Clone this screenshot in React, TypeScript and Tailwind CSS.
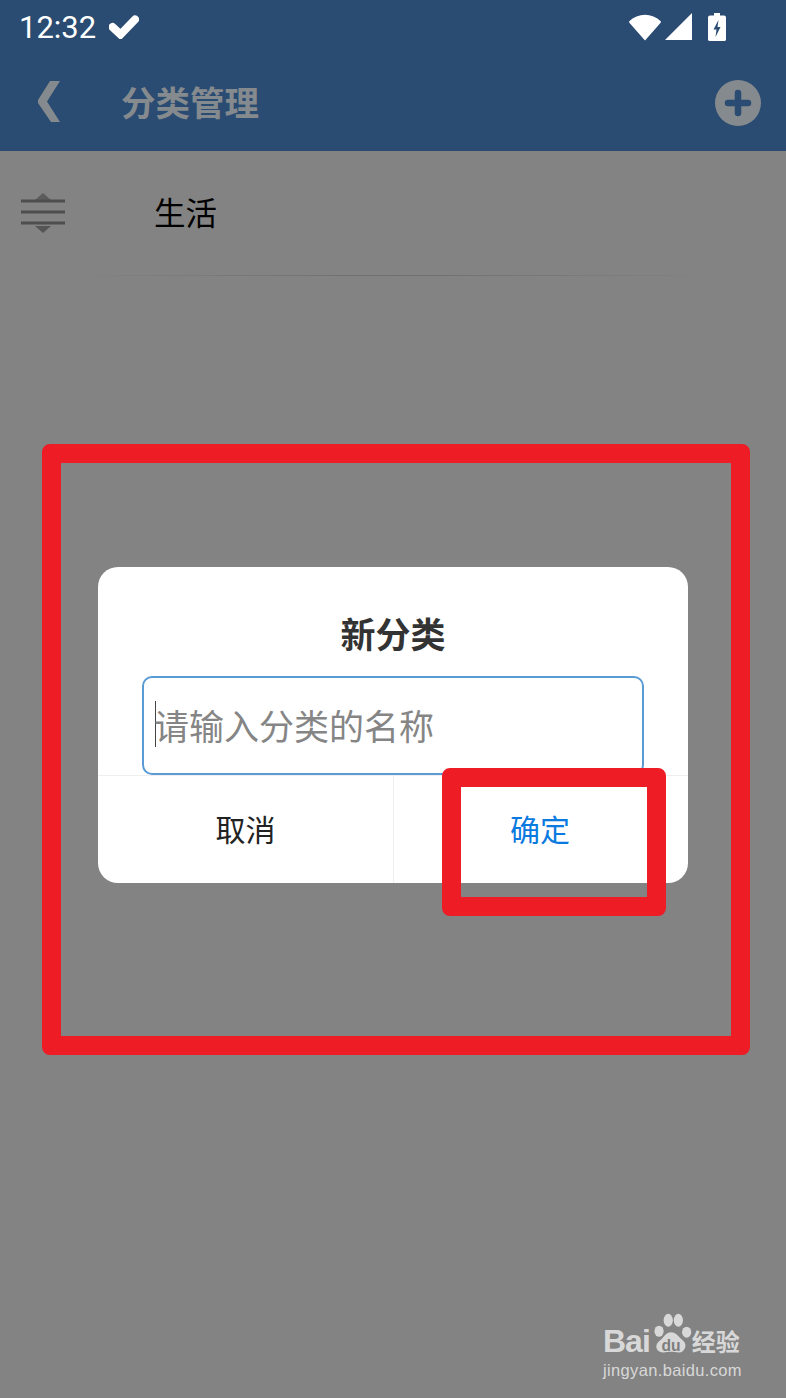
import React from 'react';

const cjk = "font-['Noto_Sans_CJK_SC','Noto_Sans',sans-serif]";

const StatusIcons = () => (
  <div className="flex items-center">
    <svg width="34" height="28" viewBox="0 0 34 28" className="mr-[2px]">
      <path d="M1 8.5 C10 -0.5 24 -0.5 33 8.5 Q33 9.5 32 10.5 L17 27.5 L2 10.5 Q1 9.500 1 8.5 Z" fill="#fff" />
    </svg>
    <svg width="28" height="28" viewBox="0 0 28 28" className="ml-[1px]">
      <path d="M0 27 L27 0 V27 Z" fill="#fff" />
    </svg>
    <svg width="18" height="30" viewBox="0 0 18 30" className="ml-[15px]">
      <path d="M6 1 H12 V3.500 H16 Q18 3.500 18 5.500 V27.500 Q18 29 16 29 H2 Q0 29 0 27.500 V5.500 Q0 3.500 2 3.500 H6 Z" fill="#fff" />
      <path d="M10.500 8 L5.500 17.500 H8.500 L7.500 25 L12.500 15 H9.500 Z" fill="#2a4b72" />
    </svg>
  </div>
);

const Header = () => (
  <header className="h-[151px] bg-[#2a4b72] shrink-0">
    <div className="h-[54px] flex items-center justify-between pl-[19px] pr-[60px]">
      <div className="flex items-center">
        <span className="font-['Roboto',sans-serif] text-[31px] leading-none text-white">12:32</span>
        <svg width="30" height="24" viewBox="0 0 30 24" className="ml-[13px]">
          <path d="M3.500 12 L11.500 19.500 L26 4.500" fill="none" stroke="#fff" strokeWidth="8" strokeLinecap="round" strokeLinejoin="miter" />
        </svg>
      </div>
      <StatusIcons />
    </div>
    <div className="h-[97px] flex items-center pl-[37px] pr-[25px]">
      <svg width="24" height="44" viewBox="0 0 24 44" className="mb-[1px]">
        <path d="M13 1 H23 L10 21.500 L23 42 H14 L1 23 V20 Z" fill="#858a8e" />
      </svg>
      <h1 className={`${cjk} ml-[60px] -mt-[3px] text-[34.500px] leading-none font-bold text-[#858a8e]`}>分类管理</h1>
      <svg width="46" height="46" viewBox="0 0 46 46" className="ml-auto">
        <circle cx="23" cy="23" r="23" fill="#858a8e" />
        <path d="M23 13 V33 M13 23 H33" stroke="#2a4b72" strokeWidth="6.500" strokeLinecap="round" />
      </svg>
    </div>
  </header>
);

const DragIcon = () => (
  <svg width="44" height="42" viewBox="0 0 44 42" className="blur-[0.6px]">
    <path d="M14 8 L22 1 L30 8 Z" fill="#5c5c5c" />
    <path d="M0 9 H44 M0 20 H44 M0 31 H44" stroke="#4e4e4e" strokeWidth="3" />
    <path d="M14 34 H30 L22 41 Z" fill="#555" />
  </svg>
);

const CategoryRow = () => (
  <div>
    <div className="h-[124px] flex items-center pl-[21px]">
      <DragIcon />
      <span className={`${cjk} ml-[89px] -mt-[2px] text-[31.500px] leading-none text-black`}>生活</span>
    </div>
    <div className="mx-[70px] h-px bg-gradient-to-r from-transparent via-[#6e6e6e] to-transparent" />
  </div>
);

const Dialog = () => (
  <div className="w-[590px] h-[316px] bg-white rounded-[20px] flex flex-col overflow-hidden">
    <h2 className={`${cjk} h-[109px] pt-[42px] text-center text-[35px] leading-[47px] font-bold text-[#333]`}>新分类</h2>
    <div className="mx-[44px] h-[99px] shrink-0 border-2 border-[#5a9bd5] rounded-[10px] flex items-center pl-[11px] pb-[3px]">
      <span className="w-px h-[46px] bg-[#444] -mr-[2px]" />
      <span className={`${cjk} text-[35px] leading-none text-[#858585]`}>请输入分类的名称</span>
    </div>
    <div className="flex-1 flex border-t border-[#eeeeee]">
      <div className={`${cjk} w-[296px] border-r border-[#eeeeee] flex items-center justify-center text-[30px] leading-none text-[#222] pb-[4px]`}>
        取消
      </div>
      <div className={`${cjk} flex-1 flex items-center justify-center text-[30px] leading-none text-[#0a7ae0] pb-[4px] pr-[2px]`}>确定</div>
    </div>
  </div>
);

const Watermark = () => (
  <div className="absolute right-[43px] bottom-[18px] w-[140px] text-[#d8d8d8]">
    <div className="flex items-end h-[48px]">
      <span className="font-['Liberation_Sans',sans-serif] font-bold text-[32px] leading-[32px] tracking-[-1px]">Bai</span>
      <svg width="42" height="46" viewBox="0 0 44 50" className="shrink-0">
        <ellipse cx="9" cy="22" rx="5" ry="6" fill="#d8d8d8" />
        <ellipse cx="19" cy="10" rx="5" ry="7" fill="#d8d8d8" />
        <ellipse cx="30" cy="10" rx="5" ry="7" fill="#d8d8d8" />
        <ellipse cx="39" cy="23" rx="5" ry="6" fill="#d8d8d8" />
        <path d="M22 23 C28 23 30 28 35 32 C41 37 36 46 30 45 C25 44 19 44 14 45 C7 46 3 38 9 33 C14 29 16 23 22 23 Z" fill="#d8d8d8" />
        <text x="22" y="43" textAnchor="middle" fontFamily="Liberation Sans" fontWeight="700" fontSize="17" fill="#7d7d7d">du</text>
      </svg>
      <span className={`${cjk} font-bold text-[24px] leading-[32px] whitespace-nowrap`}>经验</span>
    </div>
    <div className="font-['Liberation_Sans',sans-serif] text-[16.500px] leading-[20px] mt-[3px] whitespace-nowrap tracking-[0.35px]">jingyan.baidu.com</div>
  </div>
);

export default function App() {
  return (
    <div className="relative w-[786px] h-[1398px] overflow-hidden bg-[#838383] flex flex-col">
      <Header />
      <CategoryRow />

      {/* dialog */}
      <div className="absolute inset-x-0 top-[567px] flex justify-center">
        <Dialog />
      </div>

      {/* red annotation boxes */}
      <div className="absolute left-[42px] top-[444px] w-[708px] h-[611px] border-[19px] border-[#ee1c25] rounded-[8px]" />
      <div className="absolute left-[442px] top-[768px] w-[224px] h-[148px] border-[19px] border-[#ee1c25] rounded-[8px]" />

      <Watermark />
    </div>
  );
}
